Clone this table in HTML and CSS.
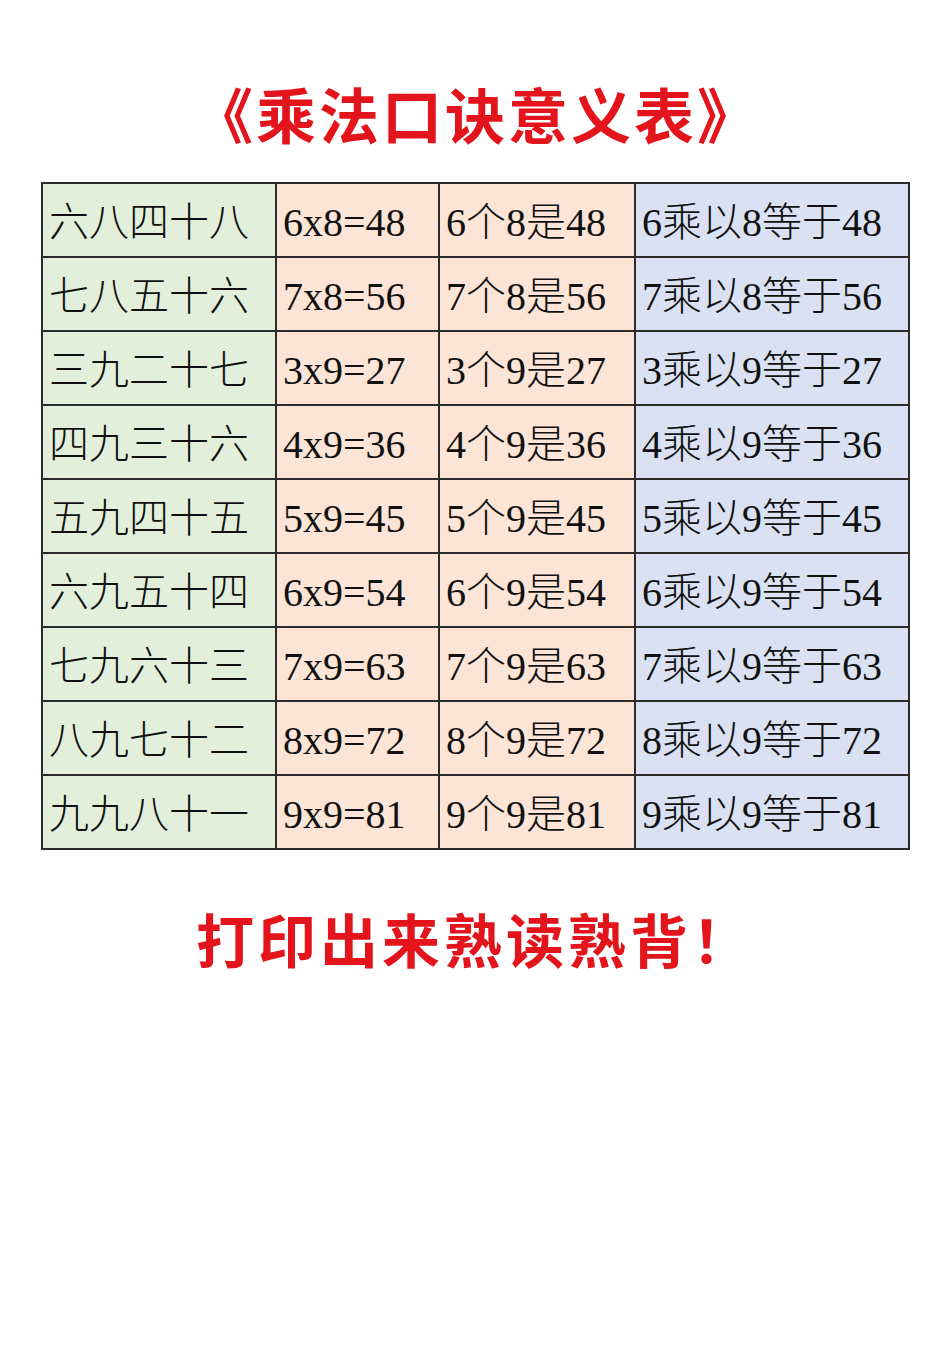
FILE: index.html
```html
<!DOCTYPE html>
<html lang="zh-CN">
<head>
<meta charset="utf-8">
<title>乘法口诀意义表</title>
<link rel="stylesheet" href="styles.css">
</head>
<body>
<div class="page">
  <h1 class="title">《乘法口诀意义表》</h1>
  <table class="grid">
    <tbody>
      <tr><td class="c1">六八四十八</td><td class="c2">6x8=48</td><td class="c3">6个8是48</td><td class="c4">6乘以8等于48</td></tr>
      <tr><td class="c1">七八五十六</td><td class="c2">7x8=56</td><td class="c3">7个8是56</td><td class="c4">7乘以8等于56</td></tr>
      <tr><td class="c1">三九二十七</td><td class="c2">3x9=27</td><td class="c3">3个9是27</td><td class="c4">3乘以9等于27</td></tr>
      <tr><td class="c1">四九三十六</td><td class="c2">4x9=36</td><td class="c3">4个9是36</td><td class="c4">4乘以9等于36</td></tr>
      <tr><td class="c1">五九四十五</td><td class="c2">5x9=45</td><td class="c3">5个9是45</td><td class="c4">5乘以9等于45</td></tr>
      <tr><td class="c1">六九五十四</td><td class="c2">6x9=54</td><td class="c3">6个9是54</td><td class="c4">6乘以9等于54</td></tr>
      <tr><td class="c1">七九六十三</td><td class="c2">7x9=63</td><td class="c3">7个9是63</td><td class="c4">7乘以9等于63</td></tr>
      <tr><td class="c1">八九七十二</td><td class="c2">8x9=72</td><td class="c3">8个9是72</td><td class="c4">8乘以9等于72</td></tr>
      <tr><td class="c1">九九八十一</td><td class="c2">9x9=81</td><td class="c3">9个9是81</td><td class="c4">9乘以9等于81</td></tr>
    </tbody>
  </table>
  <p class="footer">打印出来熟读熟背！</p>
</div>
</body>
</html>
```
FILE: styles.css
```css
html, body {
  margin: 0;
  padding: 0;
  background: #ffffff;
}

.page {
  width: 950px;
  min-height: 1346px;
  padding-top: 77px;
  box-sizing: border-box;
}

.title {
  margin: 0;
  font-family: "Noto Sans CJK SC", sans-serif;
  font-weight: 700;
  font-size: 60px;
  line-height: 72px;
  letter-spacing: 3px;
  text-indent: 3px;
  color: #e3141b;
  text-align: center;
}

.grid {
  margin: 33px 0 0 41px;
  width: 867px;
  border-collapse: collapse;
  table-layout: fixed;
  font-family: "Liberation Serif", "Noto Sans CJK SC", serif;
  font-size: 40px;
  font-weight: 300;
  color: #111111;
}

.grid td {
  border: 2px solid #2b2b2b;
  height: 74px;
  padding: 5px 0 0 6px;
  box-sizing: border-box;
  white-space: nowrap;
  line-height: 1;
  vertical-align: middle;
}

.c1 { width: 234px; background: #e2efda; }
.c2 { width: 163px; background: #fce4d6; }
.c3 { width: 196px; background: #fce4d6; }
.c4 { width: 274px; background: #d9e1f2; }

.footer {
  margin: 54px 0 0 0;
  font-family: "Noto Sans CJK SC", sans-serif;
  font-weight: 700;
  font-size: 58px;
  line-height: 68px;
  letter-spacing: 4px;
  color: #e3141b;
  text-align: center;
}
```
